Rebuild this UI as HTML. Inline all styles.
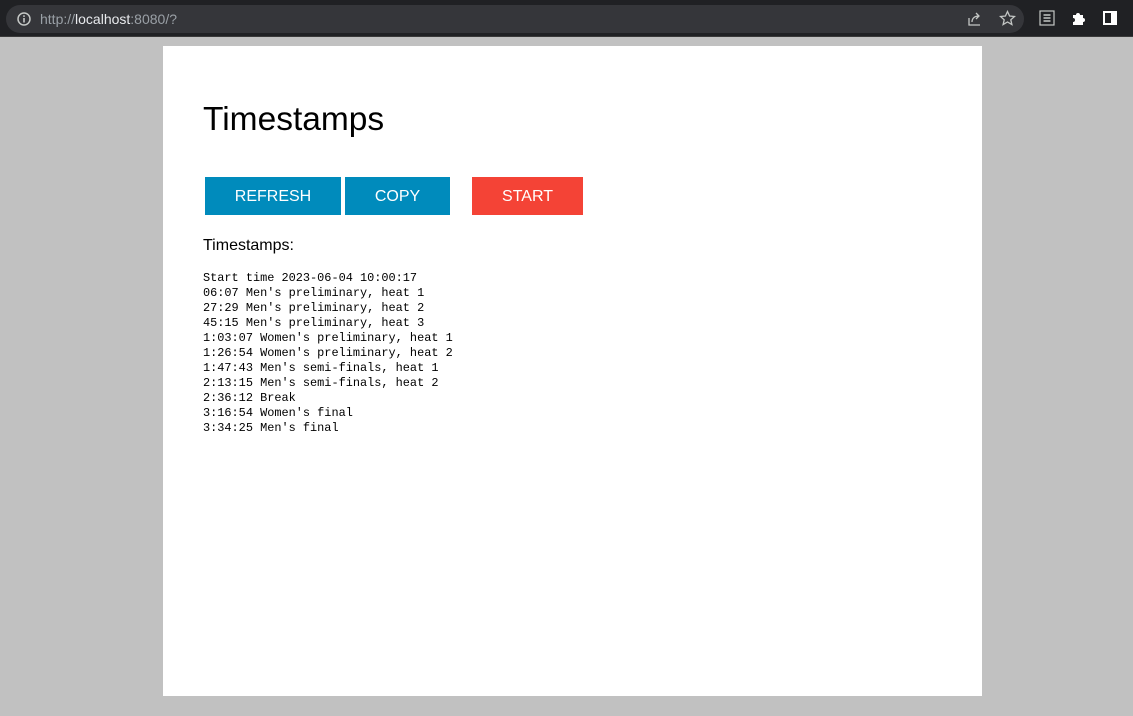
<!DOCTYPE html>
<html><head><meta charset="utf-8"><style>
*{margin:0;padding:0;box-sizing:border-box}
body{width:1133px;height:716px;background:#c1c1c1;font-family:"Liberation Sans",Arial,sans-serif;position:relative;overflow:hidden}
.bar{position:absolute;left:0;top:0;width:1133px;height:37px;background:#202124;border-bottom:1px solid #3a3a3a}
.url{position:absolute;left:6px;top:5px;width:1018px;height:28px;border-radius:14px;background:#35363a}
.url .t{position:absolute;left:34px;top:6px;font-size:14px;color:#9aa0a6}
.url .t b{font-weight:normal;color:#e8eaed}
.panel{position:absolute;left:163px;top:46px;width:819px;height:650px;background:#fff}
h1{position:absolute;left:40px;top:55px;font-size:33.5px;font-weight:normal;color:#000}
.btn{position:absolute;top:131px;height:38px;color:#fff;font-size:16px;text-align:center;line-height:39px}
.lbl{position:absolute;left:40px;top:191px;font-size:16px}
pre{position:absolute;left:40px;top:225px;font-family:"Liberation Mono",monospace;font-size:11.9px;line-height:15px;color:#000}
</style></head><body>
<div class="bar">
<div class="url">
<svg style="position:absolute;left:11px;top:7px" width="14" height="14" viewBox="0 0 14 14"><circle cx="7" cy="7" r="6" fill="none" stroke="#c4c7c5" stroke-width="1.5"/><rect x="6.2" y="6" width="1.6" height="4.5" fill="#c4c7c5"/><rect x="6.2" y="3.3" width="1.6" height="1.6" fill="#c4c7c5"/></svg>
<div class="t">http://<b>localhost</b>:8080/?</div>
<svg style="position:absolute;left:961px;top:6px" width="16" height="16" viewBox="0 0 16 16" fill="none" stroke="#c4c7c5" stroke-width="1.3"><path d="M2 7v7h11"/><path d="M5 11c0-4 3-6 7-6M9 2l3 3-3 3"/></svg>
<svg style="position:absolute;left:993px;top:5px" width="17" height="17" viewBox="0 0 17 17" fill="none" stroke="#c4c7c5" stroke-width="1.3"><path d="M8.5 1.5l2.1 4.5 4.9.5-3.7 3.3 1.1 4.8-4.4-2.6-4.4 2.6 1.1-4.8L1.5 6.5l4.9-.5z"/></svg>
</div>
<svg style="position:absolute;left:1039px;top:10px" width="16" height="16" viewBox="0 0 16 16" fill="none" stroke="#c4c7c5" stroke-width="1.2"><rect x="1" y="1" width="14" height="14"/><path d="M4.5 5h7M4.5 8h7M4.5 11h7" stroke-width="1.6"/></svg>
<svg style="position:absolute;left:1071px;top:10px" width="16" height="16" viewBox="0 0 16 16" fill="#fff"><path d="M2 5h3a2 2 0 1 1 4 0h3v3a2 2 0 1 1 0 4v3H2v-3a2 2 0 1 0 0-4z"/></svg>
<svg style="position:absolute;left:1103px;top:11px" width="14" height="14" viewBox="0 0 14 14"><rect x="1" y="1" width="12" height="12" fill="none" stroke="#fff" stroke-width="2"/><rect x="8" y="1" width="5" height="12" fill="#fff"/></svg>
</div>
<div class="panel">
<h1>Timestamps</h1>
<div class="btn" style="left:42px;width:136px;background:#008bbc">REFRESH</div>
<div class="btn" style="left:182px;width:105px;background:#008bbc">COPY</div>
<div class="btn" style="left:309px;width:111px;background:#f44336">START</div>
<div class="lbl">Timestamps:</div>
<pre>Start time 2023-06-04 10:00:17
06:07 Men's preliminary, heat 1
27:29 Men's preliminary, heat 2
45:15 Men's preliminary, heat 3
1:03:07 Women's preliminary, heat 1
1:26:54 Women's preliminary, heat 2
1:47:43 Men's semi-finals, heat 1
2:13:15 Men's semi-finals, heat 2
2:36:12 Break
3:16:54 Women's final
3:34:25 Men's final</pre>
</div>
</body></html>
